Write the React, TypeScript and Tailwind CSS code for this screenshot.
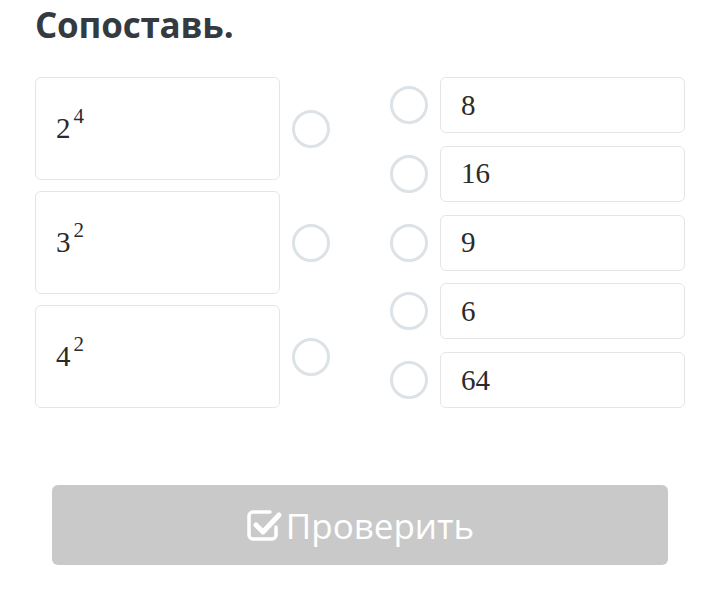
import React from "react";

const serif = { fontFamily: '"Liberation Serif", "Times New Roman", serif' };

function Circle() {
  return <div className="w-[38px] h-[38px] rounded-full border-[3px] border-[#dde2e6] bg-white shrink-0" />;
}

function CheckIcon() {
  return (
    <svg width="36" height="34" viewBox="0 0 36 34" className="shrink-0">
      <path
        d="M30 19 V27 A4 4 0 0 1 26 31 H7 A4 4 0 0 1 3 27 V8 A4 4 0 0 1 7 4 H24"
        fill="none"
        stroke="white"
        strokeWidth="3.5"
        strokeLinecap="round"
      />
      <path
        d="M10 17 L17 24 L33 7"
        fill="none"
        stroke="white"
        strokeWidth="5"
        strokeLinecap="round"
        strokeLinejoin="round"
      />
    </svg>
  );
}

export default function App() {
  const left = [
    ["2", "4"],
    ["3", "2"],
    ["4", "2"],
  ];
  const right = ["8", "16", "9", "6", "64"];
  return (
    <div className="w-[720px] h-[604px] bg-white relative overflow-hidden">
      <div className="pl-[35px] pt-[3px]">
        <h1
          className="text-[35px] font-bold text-[#343a40] leading-[44px] tracking-[-0.2px]"
          style={{ fontFamily: '"Open Sans", "Noto Sans", sans-serif' }}
        >
          Сопоставь.
        </h1>
        <div className="flex mt-[30px]">
          <div className="flex flex-col gap-[11px]">
            {left.map(([b, e], i) => (
              <div key={i} className="flex items-center gap-[12px]">
                <div className="w-[245px] h-[103px] rounded-[6px] border border-[#e2e6e8] flex items-center pl-[20px]">
                  <span className="text-[#2a2a2a] text-[29px] leading-none" style={serif}>
                    {b}
                    <span className="text-[21px] relative top-[-15px] ml-[3px]">{e}</span>
                  </span>
                </div>
                <Circle />
              </div>
            ))}
          </div>
          <div className="flex flex-col gap-[12.75px] ml-[60px]">
            {right.map((v, i) => (
              <div key={i} className="flex items-center gap-[12px]">
                <Circle />
                <div className="w-[245px] h-[56px] rounded-[6px] border border-[#e2e6e8] flex items-center pl-[20px]">
                  <span className="text-[#2a2a2a] text-[29px] leading-none" style={serif}>
                    {v}
                  </span>
                </div>
              </div>
            ))}
          </div>
        </div>
      </div>
      <div className="px-[52px] mt-[77px]">
        <div className="h-[80px] rounded-[6px] bg-[#c9c9c9] flex items-center justify-center gap-[4px]">
          <CheckIcon />
          <span
            className="text-white text-[35px] leading-none"
            style={{ fontFamily: '"Open Sans", "Noto Sans", sans-serif' }}
          >
            Проверить
          </span>
        </div>
      </div>
    </div>
  );
}
